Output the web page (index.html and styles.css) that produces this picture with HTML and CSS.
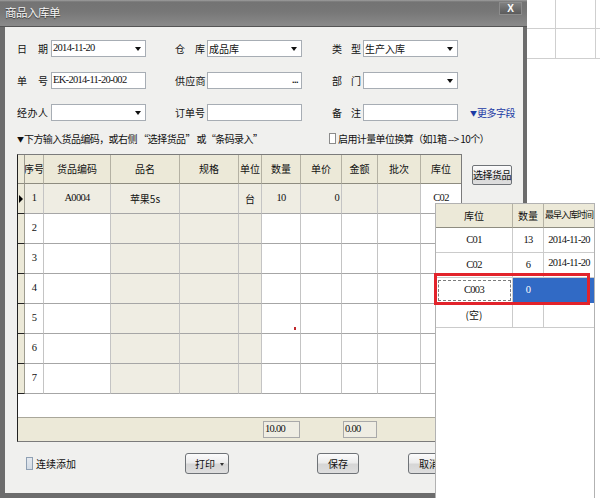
FILE: index.html
```html
<!DOCTYPE html>
<html lang="zh-CN">
<head>
<meta charset="utf-8">
<title>商品入库单</title>
<link rel="stylesheet" href="styles.css">
</head>
<body>
<div class="desk">
  <div class="bgapp">
    <div class="bgcell"></div><div class="bgcell"></div><div class="bgcell end"></div>
    <div class="bgcell"></div><div class="bgcell"></div><div class="bgcell end"></div>
  </div>

  <div class="window">
    <div class="titlebar">
      <span class="title">商品入库单</span>
      <span class="close">X</span>
    </div>
    <div class="body">
      <div class="form">
        <div class="frow">
          <div class="field f1"><span class="lbl"><i>日</i><i>期</i></span><div class="inp"><span class="num">2014-11-20</span><i class="arrow"></i></div></div>
          <div class="field f2"><span class="lbl"><i>仓</i><i>库</i></span><div class="inp"><span>成品库</span><i class="arrow"></i></div></div>
          <div class="field f3"><span class="lbl"><i>类</i><i>型</i></span><div class="inp"><span>生产入库</span><i class="arrow"></i></div></div>
        </div>
        <div class="frow">
          <div class="field f1"><span class="lbl"><i>单</i><i>号</i></span><div class="inp"><span class="num">EK-2014-11-20-002</span></div></div>
          <div class="field f2"><span class="lbl tight3"><i>供</i><i>应</i><i>商</i></span><div class="inp"><span></span><span class="dots">...</span></div></div>
          <div class="field f3"><span class="lbl"><i>部</i><i>门</i></span><div class="inp"><span></span><i class="arrow"></i></div></div>
        </div>
        <div class="frow">
          <div class="field f1"><span class="lbl"><i>经</i><i>办</i><i>人</i></span><div class="inp"><span></span><i class="arrow"></i></div></div>
          <div class="field f2"><span class="lbl"><i>订</i><i>单</i><i>号</i></span><div class="inp"></div></div>
          <div class="field f3"><span class="lbl"><i>备</i><i>注</i></span><div class="inp"></div></div>
          <span class="more"><span class="tri">▼</span>更多字段</span>
        </div>
      </div>

      <div class="hint">
        <div class="hint-l"><span class="tri">▼</span><span class="cmp">下方输入货品编码，或右侧 “选择货品” 或“条码录入”</span></div>
        <div class="chk"><i class="cbx"></i><span class="cmp">启用计量单位换算（如1箱 --&gt; 10个）</span></div>
      </div>

      <div class="main">
        <div class="grid">
          <div class="grow ghead">
            <div class="gc ind"></div><div class="gc">序号</div><div class="gc">货品编码</div><div class="gc">品名</div><div class="gc">规格</div><div class="gc">单位</div><div class="gc">数量</div><div class="gc">单价</div><div class="gc">金额</div><div class="gc">批次</div><div class="gc">库位</div>
          </div>
          <div class="grow cur">
            <div class="gc ind"><i class="ptr"></i></div><div class="gc num">1</div><div class="gc num">A0004</div><div class="gc">苹果5s</div><div class="gc"></div><div class="gc">台</div><div class="gc num">10</div><div class="gc r num">0</div><div class="gc"></div><div class="gc"></div><div class="gc loc num">C02</div>
          </div>
          <div class="grow">
            <div class="gc ind"></div><div class="gc num">2</div><div class="gc"></div><div class="gc ro"></div><div class="gc ro"></div><div class="gc ro"></div><div class="gc"></div><div class="gc"></div><div class="gc"></div><div class="gc"></div><div class="gc"></div>
          </div>
          <div class="grow">
            <div class="gc ind"></div><div class="gc num">3</div><div class="gc"></div><div class="gc ro"></div><div class="gc ro"></div><div class="gc ro"></div><div class="gc"></div><div class="gc"></div><div class="gc"></div><div class="gc"></div><div class="gc"></div>
          </div>
          <div class="grow">
            <div class="gc ind"></div><div class="gc num">4</div><div class="gc"></div><div class="gc ro"></div><div class="gc ro"></div><div class="gc ro"></div><div class="gc"></div><div class="gc"></div><div class="gc"></div><div class="gc"></div><div class="gc"></div>
          </div>
          <div class="grow">
            <div class="gc ind"></div><div class="gc num">5</div><div class="gc"></div><div class="gc ro"></div><div class="gc ro"></div><div class="gc ro"></div><div class="gc mk"><i class="mark"></i></div><div class="gc"></div><div class="gc"></div><div class="gc"></div><div class="gc"></div>
          </div>
          <div class="grow">
            <div class="gc ind"></div><div class="gc num">6</div><div class="gc"></div><div class="gc ro"></div><div class="gc ro"></div><div class="gc ro"></div><div class="gc"></div><div class="gc"></div><div class="gc"></div><div class="gc"></div><div class="gc"></div>
          </div>
          <div class="grow">
            <div class="gc ind"></div><div class="gc num">7</div><div class="gc"></div><div class="gc ro"></div><div class="gc ro"></div><div class="gc ro"></div><div class="gc"></div><div class="gc"></div><div class="gc"></div><div class="gc"></div><div class="gc"></div>
          </div>
          <div class="gblank"></div>
          <div class="gfoot">
            <span class="sumbox s1 num">10.00</span>
            <span class="sumbox s2 num">0.00</span>
          </div>
        </div>
        <div class="side">
          <span class="btn pick">选择货品</span>
        </div>
      </div>

      <div class="actions">
        <div class="ck2"><i class="cbx2"></i><span>连续添加</span></div>
        <span class="btn b-print">打印<i class="sarrow"></i></span>
        <span class="btn b-save">保存</span>
        <span class="btn b-cancel">取消</span>
      </div>
    </div>
  </div>

  <div class="popup">
    <div class="prow phead"><div class="pc">库位</div><div class="pc">数量</div><div class="pc tight">最早入库时间</div></div>
    <div class="prow"><div class="pc num">C01</div><div class="pc num">13</div><div class="pc num">2014-11-20</div></div>
    <div class="prow"><div class="pc num">C02</div><div class="pc num">6</div><div class="pc num up">2014-11-20</div></div>
    <div class="prow"><div class="pc num focus">C003</div><div class="pc num hl">0</div><div class="pc hl"></div></div>
    <div class="prow"><div class="pc">(空)</div><div class="pc"></div><div class="pc"></div></div>
    <div class="redbox"></div>
  </div>
</div>
</body>
</html>
```

FILE: styles.css
```css
* { box-sizing: border-box; }
html, body { margin: 0; padding: 0; }
body {
  font: 10px/1.2 "Noto Sans CJK SC", sans-serif;
  color: #111;
  background: #fff;
}
.desk { position: relative; width: 600px; height: 498px; overflow: hidden; background: #fff; }

/* narrow numeric text, like the bitmap digits of the original */
.num { font-family: "Liberation Serif", "Noto Sans CJK SC", serif; font-size: 10.5px; letter-spacing: -0.7px; }
.cmp { letter-spacing: -0.6px; }

/* background application behind the dialog */
.bgapp {
  position: absolute; left: 527px; top: 0;
  display: grid; grid-template-columns: 29px 40px 4px; grid-template-rows: 29px 30px;
}
.bgcell { border-right: 1px solid #cfcfcf; border-bottom: 1px solid #cfcfcf; }
.bgcell.end { border-right: 0; }

/* dialog window */
.window {
  position: absolute; left: 0; top: 0; width: 527px; height: 498px;
  display: flex; flex-direction: column;
  background: #6c6c6c;
}
.titlebar {
  height: 27px; flex: none;
  display: flex; align-items: center; justify-content: space-between;
  padding: 0 5px 1px 5px;
  background: linear-gradient(#a0a0a0 0, #737373 2px, #777 45%, #8a8a8a 100%);
  border-bottom: 1px solid #555;
}
.title { color: #f4f4f4; font-size: 11.5px; letter-spacing: -0.5px; text-shadow: 0 1px 1px #333; }
.close {
  align-self: flex-start; margin-top: 2px;
  width: 23px; height: 13px;
  background: linear-gradient(#808080, #5b5b5b);
  border: 1px solid #8c8c8c;
  color: #fff; font: bold 10px/11px "Liberation Sans", sans-serif; text-align: center;
}
.body {
  flex: 1; margin: 0 4px 5px 5px;
  background: #f0f0ee;
  padding: 13px 0 0 12px;
  display: flex; flex-direction: column;
}

/* header form */
.form { display: flex; flex-direction: column; gap: 15px; }
.frow { display: flex; align-items: center; height: 17px; }
.field { display: flex; align-items: center; flex: none; }
.f1 { width: 158px; }
.f2 { width: 155px; }
.f3 { width: 140px; }
.lbl { display: flex; justify-content: space-between; flex: none; }
.lbl i { font-style: normal; }
.f1 .lbl { width: 31px; margin-right: 3px; }
.f2 .lbl { width: 30px; margin-right: 2px; }
.f3 .lbl { width: 29px; margin-left: 2px; margin-right: 2px; }
.lbl.tight3 { letter-spacing: -0.5px; }
.inp {
  width: 95px; height: 17px;
  background: #fff; border: 1px solid #a7adb4;
  display: flex; align-items: center; justify-content: space-between;
  padding: 0 4px 0 1px;
  white-space: nowrap; overflow: hidden;
}
.arrow { width: 0; height: 0; border-left: 3px solid transparent; border-right: 3px solid transparent; border-top: 4px solid #111; }
.dots { font: bold 9px/1 "Liberation Sans", sans-serif; letter-spacing: -0.5px; margin-right: -1px; }
.more { color: #1c3aa4; white-space: nowrap; letter-spacing: -0.5px; }
.tri { font-size: 7px; vertical-align: 1px; letter-spacing: 0; }

/* hint row */
.hint { display: flex; align-items: center; height: 15px; margin-top: 10px; white-space: nowrap; }
.hint-l { width: 312px; }
.chk { display: flex; align-items: center; }
.cbx { display: block; width: 7px; height: 11px; border: 1px solid #8b8b8b; background: #fff; margin-right: 2px; }

/* grid */
.main { display: flex; align-items: flex-start; margin-top: 8px; }
.grid { width: 445px; flex: none; border: 1px solid #7b7b7b; border-left-color: #222; background: #fff; }
.grow, .gfoot {
  display: grid;
  grid-template-columns: 7px 19px 67px 69px 59px 23px 39px 41px 36px 43px 40px;
}
.grow { height: 30px; }
.ghead { height: 29px; }
.gc {
  border-right: 1px solid #c4c4c4; border-bottom: 1px solid #a6a6a6;
  display: flex; align-items: center; justify-content: center;
  white-space: nowrap; overflow: hidden;
}
.gc:last-child { border-right: 0; }
.ghead .gc { background: #ece9d8; border-bottom-color: #8e8c80; border-right-color: #b4b1a3; }
.gc.ind { background: #ece9d8; border-bottom-color: #222; border-right-color: #9d9b8f; justify-content: flex-start; padding-left: 1px; }
.ghead .gc.ind { border-bottom-color: #8e8c80; }
.ro { background: #efede3; }
.cur .gc { background: #efede3; }
.cur .gc.ind { background: #ece9d8; }
.cur .gc.loc { background: #fff; }
.gc.r { justify-content: flex-end; padding-right: 2px; }
.ptr { width: 0; height: 0; border-left: 4px solid #000; border-top: 4px solid transparent; border-bottom: 4px solid transparent; }
.mk { position: relative; }
.mark { position: absolute; left: 32px; top: 23px; width: 2px; height: 3px; background: #c0282c; }
.gblank { height: 23px; }
.gfoot { height: 24px; border-top: 1px solid #a9a79a; background: #ece9d8; align-items: center; }
.sumbox {
  height: 17px; margin-left: 1px;
  border: 1px solid #a9a9a9; background: #efede3;
  display: flex; align-items: center; padding-left: 1px;
}
.s1 { grid-column: 7; width: 37px; }
.s2 { grid-column: 9; width: 34px; }

/* buttons */
.btn {
  display: flex; align-items: center; justify-content: center;
  height: 21px;
  border: 1px solid #6f7377; border-radius: 3px;
  background: linear-gradient(#fcfcfc, #ececec 45%, #d6d6d6 55%, #dedede);
  white-space: nowrap;
}
.side { padding: 11px 0 0 10px; }
.pick { width: 40px; height: 20px; letter-spacing: -0.5px; border-radius: 2px; }
.actions { display: flex; align-items: center; height: 21px; margin-top: 11px; padding-left: 9px; }
.ck2 { width: 159px; display: flex; align-items: center; }
.cbx2 { display: block; width: 7px; height: 13px; border: 1px solid #8fa0b3; background: linear-gradient(#e4e9ef, #d3dbe4); margin-right: 3px; }
.b-print { width: 44px; position: relative; padding-right: 4px; }
.sarrow { position: absolute; right: 4px; top: 9px; width: 0; height: 0; border-left: 2px solid transparent; border-right: 2px solid transparent; border-top: 3px solid #333; }
.b-save { width: 42px; margin-left: 88px; }
.b-cancel { width: 42px; margin-left: 49px; }

/* location popup */
.popup {
  position: absolute; left: 435px; top: 203px; width: 160px; height: 295px;
  background: #fff; border: 1px solid #b2b2b2; border-bottom: 0;
}
.prow { display: grid; grid-template-columns: 77px 31px 50px; height: 25px; }
.phead { height: 24px; }
.pc {
  border-right: 1px solid #cbcbcb; border-bottom: 1px solid #cbcbcb;
  display: flex; align-items: center; justify-content: center;
  white-space: nowrap; overflow: hidden;
}
.pc:last-child { border-right: 0; }
.phead .pc { background: #ece9d8; border-bottom-color: #8e8c80; border-right-color: #b4b1a3; }
.tight { font-size: 9px; letter-spacing: -1px; }
.up { align-items: flex-start; padding-top: 4px; }
.hl { background: #316ac5; color: #fff; border-color: #316ac5; }
.focus { outline: 1px dashed #7c7c7c; outline-offset: -3px; }
.redbox { position: absolute; left: -2px; top: 69px; width: 156px; height: 32px; border: 3px solid #e2232b; }
```
